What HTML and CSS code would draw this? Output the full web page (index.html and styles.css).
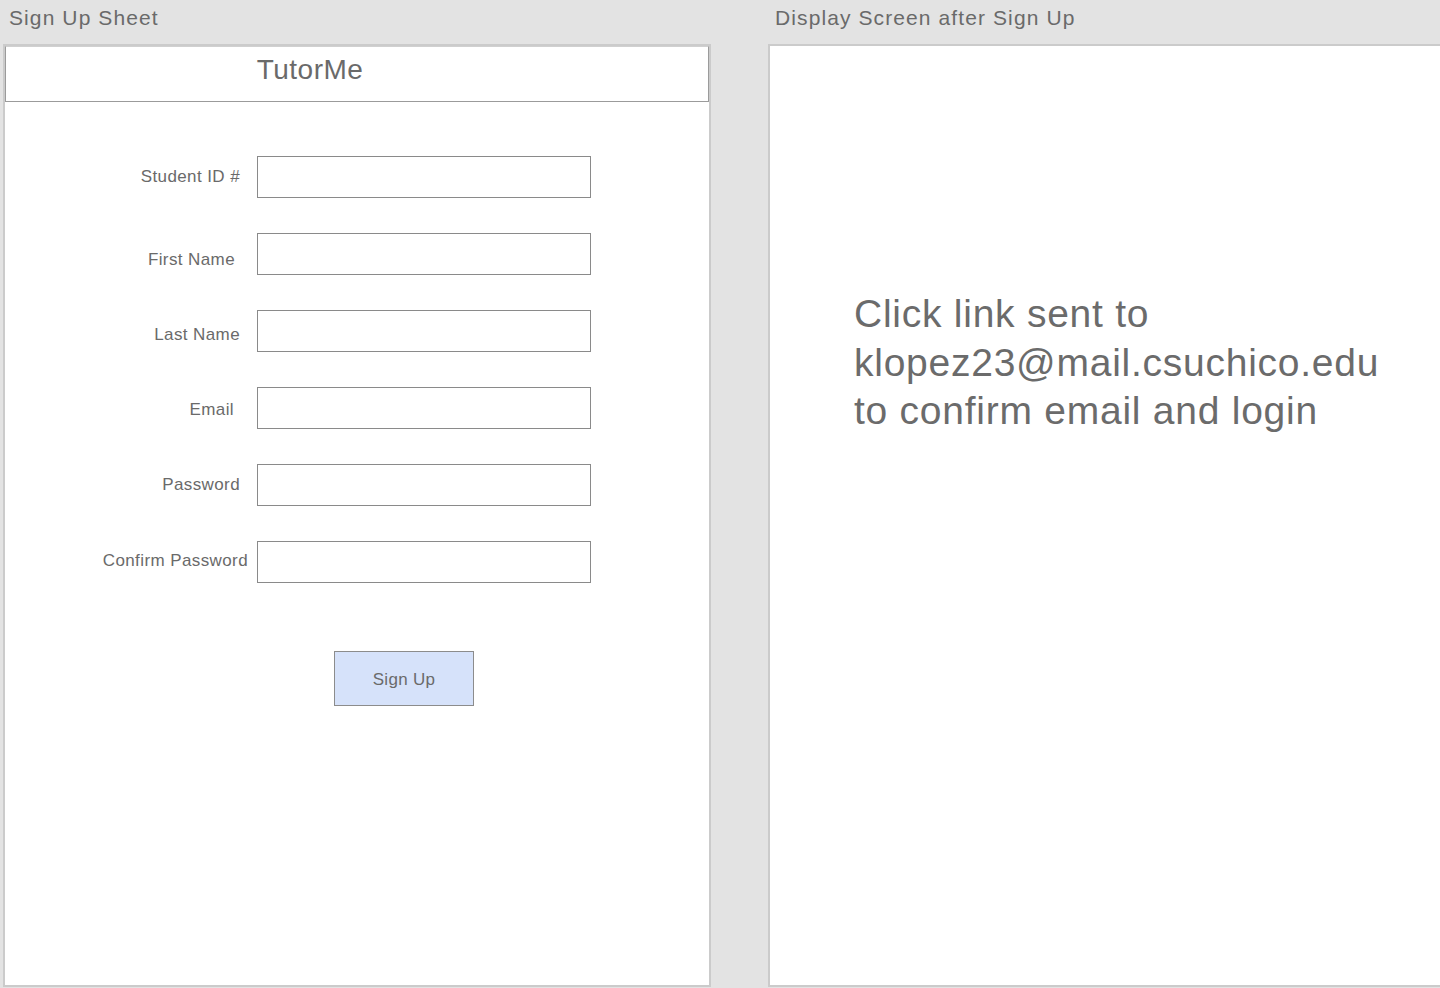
FILE: index.html
```html
<!DOCTYPE html>
<html>
<head>
<meta charset="utf-8">
<title>TutorMe Sign Up</title>
<link rel="stylesheet" href="styles.css">
</head>
<body>
<div class="board">
  <section class="column column-left">
    <div class="caption">Sign Up Sheet</div>
    <div class="frame">
      <div class="app-header">TutorMe</div>
      <form class="signup">
        <label class="field-label pad-8">Student ID #</label>
        <div class="input"></div>
        <label class="field-label pad-13 nudge-5">First Name</label>
        <div class="input"></div>
        <label class="field-label pad-8 nudge-3">Last Name</label>
        <div class="input"></div>
        <label class="field-label pad-14 nudge-2">Email</label>
        <div class="input"></div>
        <label class="field-label pad-8">Password</label>
        <div class="input"></div>
        <label class="field-label pad-0 nudge-up">Confirm Password</label>
        <div class="input"></div>
      </form>
      <div class="actions">
        <div class="btn">Sign Up</div>
      </div>
    </div>
  </section>
  <section class="column column-right">
    <div class="caption">Display Screen after Sign Up</div>
    <div class="frame frame-right">
      <p class="message">Click link sent to<br>klopez23@mail.csuchico.edu<br>to confirm email and login</p>
    </div>
  </section>
</div>
</body>
</html>
```

FILE: styles.css
```css
html, body {
  margin: 0;
  padding: 0;
  background: #e3e3e3;
  overflow: hidden;
  height: 988px;
}
body {
  font-family: "Liberation Sans", Arial, sans-serif;
  color: #666;
}
.board {
  display: flex;
  gap: 57px;
  padding-left: 3px;
}
.column {
  display: flex;
  flex-direction: column;
}
.column-left { width: 708px; flex: none; }
.column-right { width: 720px; flex: none; }
.caption {
  height: 44px;
  line-height: 36px;
  font-size: 21px;
  letter-spacing: 1.1px;
  color: #6a6a6a;
  padding-left: 6px;
  box-sizing: border-box;
}
.column-right .caption { padding-left: 7px; }
.frame {
  height: 943px;
  box-sizing: border-box;
  background: #fff;
  border: 2px solid #cbcbcb;
}
.frame-right {
  border-right: none;
}
.app-header {
  height: 56px;
  box-sizing: border-box;
  border: 1px solid #9b9b9b;
  border-top-color: #d0d0d0;
  text-align: center;
  font-size: 28px;
  letter-spacing: 0.5px;
  line-height: 46px;
  color: #6a6a6a;
  padding-right: 94px;
}
.signup {
  display: grid;
  grid-template-columns: 243px 334px;
  column-gap: 9px;
  row-gap: 35px;
  padding-top: 54px;
  margin: 0;
}
.field-label {
  align-self: center;
  text-align: right;
  font-size: 17px;
  letter-spacing: 0.4px;
  color: #6a6a6a;
}
.pad-0 { padding-right: 0; }
.pad-8 { padding-right: 8px; }
.pad-13 { padding-right: 13px; }
.pad-14 { padding-right: 14px; }
.nudge-5 { margin-top: 12px; }
.nudge-3 { margin-top: 8px; }
.nudge-2 { margin-top: 4px; }
.nudge-up { margin-bottom: 2px; }
.input {
  height: 42px;
  box-sizing: border-box;
  border: 1px solid #8a8a8a;
  background: #fff;
}
.actions {
  padding-top: 68px;
  padding-left: 329px;
}
.btn {
  width: 140px;
  height: 55px;
  box-sizing: border-box;
  background: #d6e2fa;
  border: 1px solid #8c8c8c;
  text-align: center;
  font-size: 17px;
  line-height: 56px;
  color: #6a6a6a;
  letter-spacing: 0.3px;
}
.message {
  margin: 0;
  padding: 244px 0 0 84px;
  font-size: 39px;
  line-height: 48.5px;
  letter-spacing: 0.75px;
  color: #6b6b6b;
}
```
